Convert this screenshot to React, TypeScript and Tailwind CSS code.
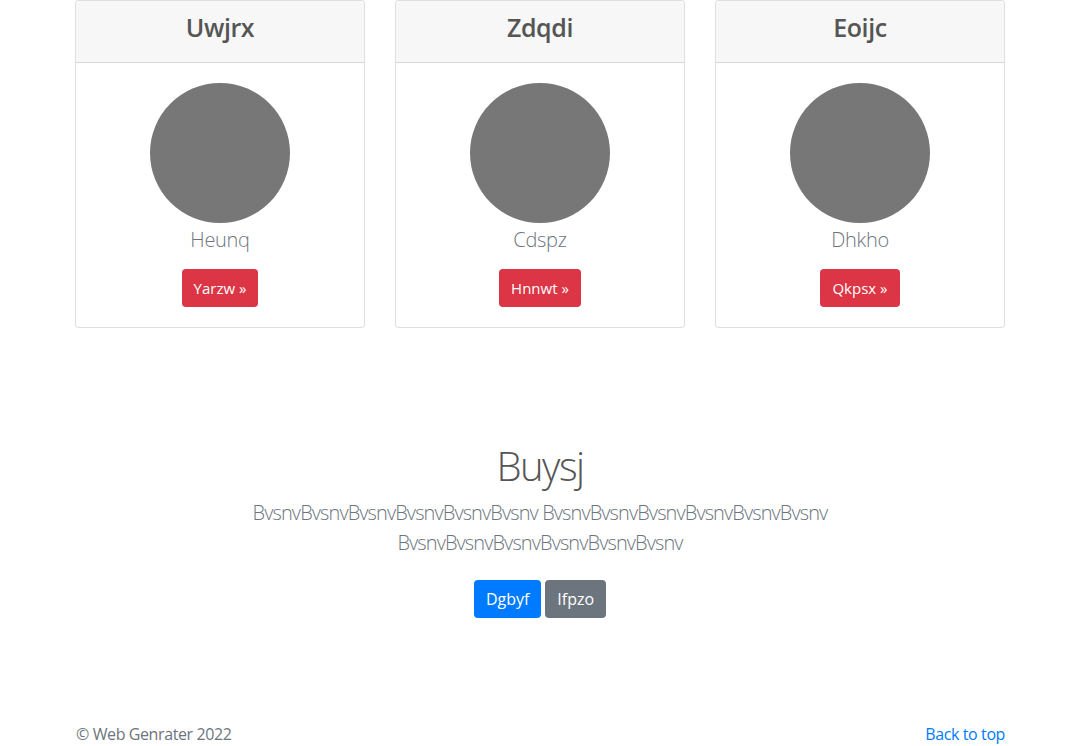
import React from "react";

const cards = [
  { title: "Uwjrx", name: "Heunq", btn: "Yarzw" },
  { title: "Zdqdi", name: "Cdspz", btn: "Hnnwt" },
  { title: "Eoijc", name: "Dhkho", btn: "Qkpsx" },
];

export default function App() {
  return (
    <div
      className="min-h-[746px] bg-white text-[#212529]"
      style={{ fontFamily: '"Open Sans", "Noto Sans", sans-serif' }}
    >
      <div className="mx-auto w-[960px] px-[15px]">
        <div className="grid grid-cols-3 gap-[30px]">
          {cards.map((c) => (
            <div
              key={c.title}
              className="flex flex-col rounded-[4px] border border-[rgba(0,0,0,0.125)] bg-white"
            >
              <div className="flex h-[62px] items-start justify-center rounded-t-[3px] border-b border-[rgba(0,0,0,0.125)] bg-[#f7f7f7] pt-[11px]">
                <h3 className="text-[25px] font-semibold leading-[30px] tracking-[-0.4px] text-[#555]">
                  {c.title}
                </h3>
              </div>
              <div className="flex flex-col items-center px-5 pt-5 pb-5">
                <div className="h-[140px] w-[140px] rounded-full bg-[#777]" />
                <p className="mt-[2px] mb-[14px] text-[20px] font-light leading-[30px] tracking-[-0.3px] text-[#6c757d]">
                  {c.name}
                </p>
                <button className="h-[38px] rounded-[4px] bg-[#dc3545] px-3 text-[15px] leading-6 text-white">
                  {c.btn} »
                </button>
              </div>
            </div>
          ))}
        </div>

        <section className="mt-[114px] flex flex-col items-center text-center">
          <h1 className="text-[40px] font-light leading-[48px] tracking-[-1.5px] text-[#555]">
            Buysj
          </h1>
          <p className="mt-2 w-[610px] text-[20px] font-light leading-[30px] tracking-[-0.9px] text-[#6c757d]">
            BvsnvBvsnvBvsnvBvsnvBvsnvBvsnv BvsnvBvsnvBvsnvBvsnvBvsnvBvsnv
            BvsnvBvsnvBvsnvBvsnvBvsnvBvsnv
          </p>
          <div className="mt-[22px] flex gap-1">
            <button className="h-[38px] rounded-[4px] bg-[#007bff] px-3 text-[16px] leading-6 text-white">
              Dgbyf
            </button>
            <button className="h-[38px] rounded-[4px] bg-[#6c757d] px-3 text-[16px] leading-6 text-white">
              Ifpzo
            </button>
          </div>
        </section>

        <footer className="mt-[104px] flex h-[24px] items-center justify-between text-[16px] leading-6 tracking-[-0.4px]">
          <p className="pl-px text-[#6c757d]">© Web Genrater 2022</p>
          <a href="#" className="text-[#007bff]">
            Back to top
          </a>
        </footer>
      </div>
    </div>
  );
}
